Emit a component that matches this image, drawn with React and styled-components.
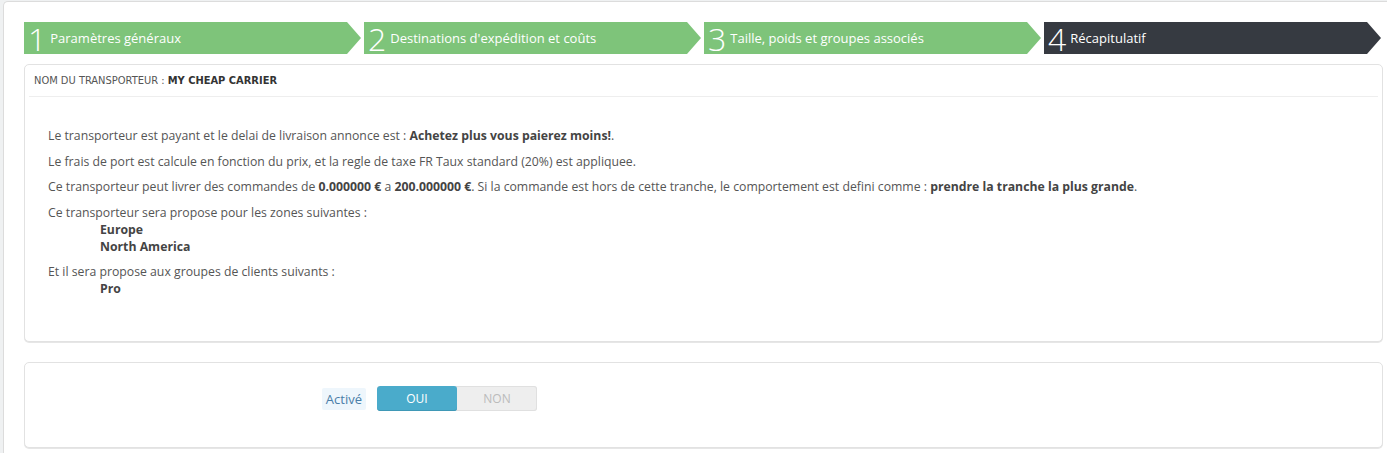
import React from "react";
import styled, { createGlobalStyle } from "styled-components";

const GlobalStyle = createGlobalStyle`
  html, body {
    margin: 0;
    padding: 0;
    background: #eff1f2;
    overflow: hidden;
  }
  body {
    font-family: "Open Sans", "Liberation Sans", sans-serif;
    font-size: 12.25px;
    color: #555;
  }
`;

const Page = styled.div`
  margin: 1px 0 0 3px;
  width: 1404px;
  height: 460px;
  background: #fff;
  border-top: 1px solid #dcdcdc;
  border-left: 1px solid #dcdcdc;
  border-top-left-radius: 5px;
  padding: 20px 20px 0 20px;
  box-sizing: border-box;
`;

const Content = styled.div`
  width: 1359px;
`;

const Steps = styled.div`
  display: grid;
  grid-template-columns: repeat(4, 337px);
  column-gap: 3px;
  height: 32px;
  margin-bottom: 10px;
`;

const Step = styled.div`
  display: flex;
  align-items: center;
  height: 32px;
  padding-left: 4px;
  background: ${(p) => (p.$current ? "#363a41" : "#7ec47a")};
  color: #fff;
  clip-path: polygon(0 0, calc(100% - 14px) 0, 100% 50%, calc(100% - 14px) 100%, 0 100%);
`;

const StepNumber = styled.span`
  font-size: 32px;
  font-weight: 300;
  line-height: 32px;
  margin-right: 4px;
  position: relative;
  top: 1px;
`;

const StepLabel = styled.span`
  font-size: 13px;
`;

const Panel = styled.div`
  background: #fff;
  border: 1px solid #e2e2e2;
  border-radius: 5px;
  box-shadow: 0 1px 0 #e6e6e6;
`;

const PanelHeading = styled.div`
  margin: 0 4px;
  padding: 0 5px;
  height: 31px;
  line-height: 32px;
  border-bottom: 1px solid #eee;
  font-family: "DejaVu Sans Condensed", "Liberation Sans Narrow", sans-serif;
  font-size: 11px;
  text-transform: uppercase;
  color: #555;

  b {
    color: #333;
  }
`;

const Summary = styled.div`
  padding: 30px 23px 44px;
`;

const Para = styled.div`
  line-height: 17px;
  margin-bottom: 8.5px;

  &:last-child {
    margin-bottom: 0;
  }

  b {
    color: #444;
  }
`;

const Indented = styled.ul`
  list-style: none;
  margin: 0;
  padding: 0 0 0 52px;
  font-weight: 700;
  color: #444;
`;

const FormPanel = styled(Panel)`
  margin-top: 20px;
  height: 86px;
  padding-top: 23px;
  box-sizing: border-box;
`;

const FormRow = styled.div`
  display: grid;
  grid-template-columns: 341px auto;
  column-gap: 11px;
  align-items: center;
`;

const Label = styled.span`
  justify-self: end;
  font-size: 13px;
  color: #4a7ea8;
  background: #eef6fc;
  padding: 2px 4px;
  border-radius: 2px;
`;

const Switch = styled.div`
  display: flex;
  width: 160px;
  height: 25px;
  border-radius: 3px;
  overflow: hidden;
  background: #eee;
  box-shadow: inset 0 0 0 1px #e0e0e0;
`;

const SwitchOption = styled.span`
  flex: 1;
  display: flex;
  align-items: center;
  justify-content: center;
  font-size: 12px;
  text-transform: uppercase;
  color: ${(p) => (p.$active ? "#fff" : "#bbb")};
  background: ${(p) => (p.$active ? "#4aabcb" : "transparent")};
  border-radius: ${(p) => (p.$active ? "3px" : "0")};
  box-shadow: ${(p) => (p.$active ? "inset 0 -1px 0 #3f98b6" : "none")};
`;

const steps = [
  "Paramètres généraux",
  "Destinations d'expédition et coûts",
  "Taille, poids et groupes associés",
  "Récapitulatif",
];

export default function App() {
  return (
    <>
      <GlobalStyle />
      <Page>
        <Content>
          <Steps>
            {steps.map((label, i) => (
              <Step key={label} $current={i === 3}>
                <StepNumber>{i + 1}</StepNumber>
                <StepLabel>{label}</StepLabel>
              </Step>
            ))}
          </Steps>

          <Panel>
            <PanelHeading>
              Nom du transporteur : <b>My cheap carrier</b>
            </PanelHeading>
            <Summary>
              <Para>
                Le transporteur est payant et le delai de livraison annonce est :{" "}
                <b>Achetez plus vous paierez moins!</b>.
              </Para>
              <Para>
                Le frais de port est calcule en fonction du prix, et la regle de taxe FR Taux
                standard (20%) est appliquee.
              </Para>
              <Para>
                Ce transporteur peut livrer des commandes de <b>0.000000 €</b> a{" "}
                <b>200.000000 €</b>. Si la commande est hors de cette tranche, le comportement est
                defini comme : <b>prendre la tranche la plus grande</b>.
              </Para>
              <Para>
                Ce transporteur sera propose pour les zones suivantes :
                <Indented>
                  <li>Europe</li>
                  <li>North America</li>
                </Indented>
              </Para>
              <Para>
                Et il sera propose aux groupes de clients suivants :
                <Indented>
                  <li>Pro</li>
                </Indented>
              </Para>
            </Summary>
          </Panel>

          <FormPanel>
            <FormRow>
              <Label>Activé</Label>
              <Switch>
                <SwitchOption $active>Oui</SwitchOption>
                <SwitchOption>Non</SwitchOption>
              </Switch>
            </FormRow>
          </FormPanel>
        </Content>
      </Page>
    </>
  );
}
